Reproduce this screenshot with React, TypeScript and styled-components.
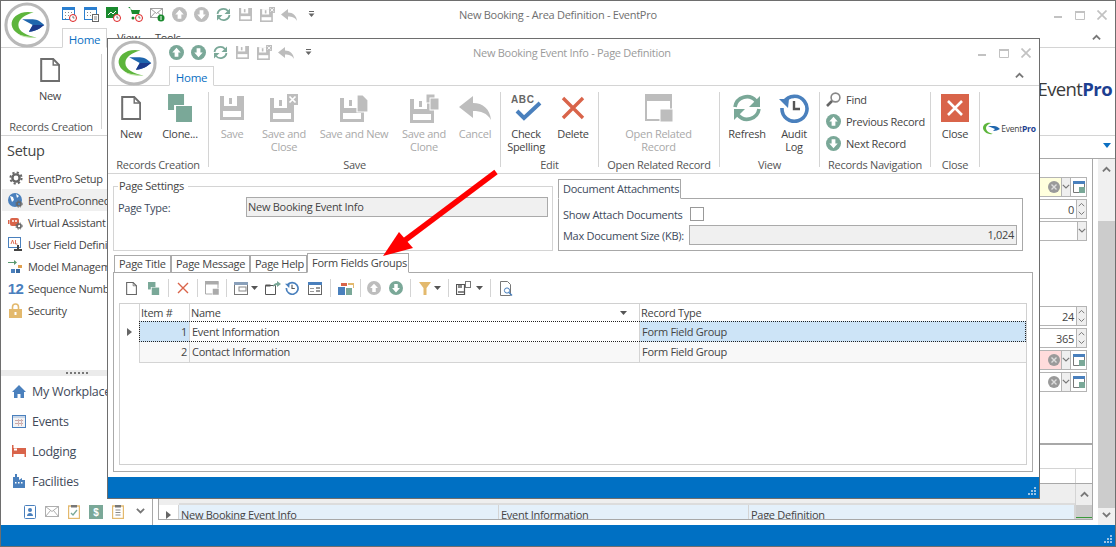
import React from "react";
import styled, { createGlobalStyle } from "styled-components";

const Global = createGlobalStyle`
  html, body { margin: 0; padding: 0; background: #fff; overflow: hidden; }
  *, *::before, *::after { box-sizing: border-box; }
  body { font-family: "Open Sans", "Noto Sans", "Liberation Sans", sans-serif; font-size: 11px; letter-spacing: -0.28px; color: #444; }
`;

const TEAL = "#7aa898";
const GRAY = "#bdbdbd";
const RED = "#d9644a";
const BLUE = "#4a80bd";
const DARK = "#6e6e6e";
const LINE = "#d4d4d4";
const STATUS = "#0070c3";

/* ---------- icons ---------- */
type Sz = { s?: number; c?: string };

const Logo = () => (
  <svg width="46" height="46" viewBox="0 0 48 48">
    <circle cx="24" cy="24" r="22" fill="#fff" stroke="#b9b9b9" strokeWidth="3.2" />
    <path d="M31 11C17 8 7 16 8 24c1 8 12 14 26 13-10-2-19-6-19-13 0-6 7-11 16-13z" fill="#5db53c" />
    <path d="M34 37c-8 1-14 0-19-3 5 2 11 2 19 3z" fill="#bfe3a8" />
    <path d="M19 18h11c5 0 9 3 12 6-4 3-9 7-16 7l4-7z" fill="#1f66ad" />
    <path d="M42 24c-4 3-9 7-16 7l4-7z" fill="#1c3a8c" />
  </svg>
);

const Doc = ({ s = 24, c = DARK }: Sz) => (
  <svg width={s * 0.85} height={s} viewBox="0 0 20 24" fill="none" stroke={c} strokeWidth="2">
    <path d="M1 1h12l6 6v16H1z" /><path d="M13 1v6h6" strokeWidth="1.4" />
  </svg>
);

const Clone = ({ s = 28, c = TEAL }: Sz) => (
  <svg width={s * 0.86} height={s} viewBox="0 0 24 28">
    <rect x="0" y="0" width="16" height="16" fill={c} />
    <rect x="6" y="11" width="18" height="17" fill="#fff" />
    <rect x="8" y="12" width="16" height="16" fill={c} />
  </svg>
);

const Floppy = ({ x = 0, y = 0, w = 24, h = 24, c = GRAY }: { x?: number; y?: number; w?: number; h?: number; c?: string }) => (
  <g transform={`translate(${x} ${y}) scale(${w / 24} ${h / 24})`}>
    <rect width="24" height="24" fill={c} />
    <rect x="4" y="0" width="13" height="10" fill="#fff" />
    <rect x="9" y="2" width="3" height="6" fill={c} />
    <rect x="3" y="15" width="18" height="6" fill="#fff" />
  </g>
);

const Save = ({ s = 24, c = GRAY }: Sz) => (
  <svg width={s} height={s} viewBox="0 0 24 24"><Floppy c={c} /></svg>
);

const SaveX = ({ s = 28 }: Sz) => (
  <svg width={s} height={s} viewBox="0 0 28 28">
    <Floppy y={4} w={24} h={24} />
    <rect x="17" y="0" width="11" height="11" fill={GRAY} />
    <path d="M19.5 2.5l6 6M25.5 2.5l-6 6" stroke="#fff" strokeWidth="1.7" />
  </svg>
);

const SaveDoc = ({ s = 28 }: Sz) => (
  <svg width={s} height={s} viewBox="0 0 28 28">
    <Floppy y={4} w={24} h={24} />
    <path d="M17 1h6l5 5v12H17z" fill={GRAY} stroke="#fff" strokeWidth="1.2" />
  </svg>
);

const SaveClone = ({ s = 29 }: Sz) => (
  <svg width={s} height={s} viewBox="0 0 29 29">
    <Floppy y={5} w={24} h={24} />
    <rect x="16" y="0" width="9" height="9" fill={GRAY} stroke="#fff" />
    <rect x="20" y="4" width="9" height="12" fill={GRAY} stroke="#fff" />
  </svg>
);

const Back = ({ w = 32, h = 24, c = GRAY }: { w?: number; h?: number; c?: string }) => (
  <svg width={w} height={h} viewBox="0 0 32 24">
    <path d="M0 11 14 0v7c10 0 17 6 18 17-4-7-10-9-18-9v7z" fill={c} />
  </svg>
);

const XMark = ({ s = 24, c = RED, w = 3.4 }: Sz & { w?: number }) => (
  <svg width={s} height={s} viewBox="0 0 24 24">
    <path d="M2 2l20 20M22 2 2 22" stroke={c} strokeWidth={w} fill="none" />
  </svg>
);

const Spell = () => (
  <svg width="32" height="28" viewBox="0 0 32 28">
    <text x="1" y="9" fontFamily="'Liberation Sans', sans-serif" fontWeight="700" fontSize="10" letterSpacing="0.6" fill="#666">ABC</text>
    <path d="M7 17l7 7L30 9" fill="none" stroke={BLUE} strokeWidth="4" />
  </svg>
);

const Related = ({ s = 28, c = GRAY }: Sz) => (
  <svg width={s} height={s} viewBox="0 0 28 28">
    <path d="M1 1h25v25H1z" fill="none" stroke={c} strokeWidth="2" />
    <rect x="0" y="0" width="27" height="7" fill={c} />
    <rect x="15" y="15" width="13" height="13" fill={c} stroke="#fff" />
  </svg>
);

const Refresh = ({ s = 30, c = TEAL }: Sz) => (
  <svg width={s} height={s} viewBox="0 0 30 30" fill="none" stroke={c} strokeWidth="3.6">
    <path d="M3 14A12 12 0 0 1 24 8" />
    <path d="M27 16A12 12 0 0 1 6 22" />
    <path d="M28 3v11H17z" fill={c} stroke="none" />
    <path d="M2 27V16h11z" fill={c} stroke="none" />
  </svg>
);

const Audit = ({ s = 30, c = BLUE }: Sz) => (
  <svg width={s} height={s} viewBox="0 0 30 30" fill="none">
    <path d="M5 9A12.5 12.5 0 1 1 3 15" stroke={c} strokeWidth="3.6" />
    <path d="M0 6l10 0-1 9z" fill={c} />
    <path d="M15 8v8h6" stroke="#555" strokeWidth="2.4" />
  </svg>
);

const Find = ({ s = 15 }: Sz) => (
  <svg width={s} height={s} viewBox="0 0 15 15" fill="none">
    <circle cx="9.5" cy="5.5" r="4.4" stroke="#888" strokeWidth="1.6" />
    <path d="M6 9l-5 5" stroke="#666" strokeWidth="2.6" />
  </svg>
);

const Round = ({ s = 15, c = TEAL, down = false }: Sz & { down?: boolean }) => (
  <svg width={s} height={s} viewBox="0 0 16 16">
    <circle cx="8" cy="8" r="8" fill={c} />
    <path d={down ? "M8 13 12.5 8H10V3.5H6V8H3.5z" : "M8 3 12.5 8H10v4.5H6V8H3.5z"} fill="#fff" />
  </svg>
);

const CloseSquare = () => (
  <svg width="28" height="28" viewBox="0 0 28 28">
    <rect width="28" height="28" fill={RED} />
    <path d="M7 7l14 14M21 7 7 21" stroke="#fff" strokeWidth="2.6" />
  </svg>
);

const Chevron = ({ up = false, s = 9, c = "#777", w = 2 }: { up?: boolean; s?: number; c?: string; w?: number }) => (
  <svg width={s} height={s * 0.7} viewBox="0 0 10 7" fill="none">
    <path d={up ? "M1 6l4-4 4 4" : "M1 1l4 4 4-4"} stroke={c} strokeWidth={w} />
  </svg>
);

const Minimize = () => <svg width="10" height="10" viewBox="0 0 10 10"><rect x="1" y="6" width="8" height="2" fill="#c2c2c2" /></svg>;
const Maximize = () => (
  <svg width="10" height="10" viewBox="0 0 10 10"><path d="M.5 1.5h9v8h-9z" fill="none" stroke="#c2c2c2" /><rect y="1" width="10" height="2" fill="#c2c2c2" /></svg>
);
const CloseGlyph = () => <svg width="10" height="10" viewBox="0 0 10 10"><path d="M.5.5l9 9M9.5.5l-9 9" stroke="#c2c2c2" strokeWidth="1.7" /></svg>;

const DropCaret = () => (
  <svg width="7" height="7" viewBox="0 0 7 7"><rect x="1" y="0" width="5" height="1" fill="#666" /><path d="M.5 2.5h6L3.5 6z" fill="#666" /></svg>
);
const Caret = () => <svg width="7" height="4" viewBox="0 0 7 4"><path d="M0 0h7L3.5 4z" fill="#555" /></svg>;

const CalClock = ({ c = "#2b7fd0" }: { c?: string }) => (
  <svg width="15" height="15" viewBox="0 0 15 15">
    <rect x=".5" y=".5" width="12" height="12" fill="#fff" stroke={c} />
    <rect width="13" height="3" fill={c} />
    <path d="M3 5h1v1H3zm3 0h1v1H6zm3 0h1v1H9zM3 8h1v1H3zm3 0h1v1H6zm-3 3h1v1H3z" fill="#888" />
    <circle cx="11" cy="11" r="3.5" fill="#fff" stroke="#d22" />
    <path d="M11 9v2h1.5" stroke="#555" strokeWidth=".8" fill="none" />
  </svg>
);
const CalList = () => (
  <svg width="15" height="15" viewBox="0 0 15 15">
    <rect x=".5" y=".5" width="12" height="12" fill="#fff" stroke="#2b7fd0" />
    <rect width="13" height="3" fill="#2b7fd0" />
    <path d="M3 5h1v1H3zm3 0h1v1H6zm-3 3h1v1H3zm3 0h1v1H6z" fill="#888" />
    <rect x="8.5" y="7.5" width="6" height="7" fill="#fff" stroke="#666" />
    <path d="M10 10h3M10 12h3" stroke="#666" strokeWidth=".8" />
  </svg>
);
const GreenClock = () => (
  <svg width="15" height="15" viewBox="0 0 15 15">
    <rect width="12" height="11" fill="#1a8a2e" />
    <path d="M2 8l3-3 2 2 3-3" stroke="#fff" fill="none" />
    <circle cx="11" cy="11" r="3.5" fill="#fff" stroke="#d22" />
    <path d="M11 9v2h1.5" stroke="#555" strokeWidth=".8" fill="none" />
  </svg>
);
const CartClock = () => (
  <svg width="15" height="15" viewBox="0 0 15 15">
    <path d="M0 0h2l2 7h7l1-4H4z" fill="#1a8a2e" />
    <circle cx="5" cy="11" r="1.5" fill="#1a8a2e" />
    <circle cx="11" cy="11" r="3.5" fill="#fff" stroke="#d22" />
    <path d="M11 9v2h1.5" stroke="#555" strokeWidth=".8" fill="none" />
  </svg>
);
const MailBadge = () => (
  <svg width="15" height="15" viewBox="0 0 15 15">
    <path d="M.5 1.5h12v9H.5zM.5 1.5l6 5 6-5M.5 10.5l4.5-5M12.5 10.5l-4.5-5" fill="#fff" stroke="#888" strokeWidth=".8" />
    <circle cx="11" cy="11" r="3.5" fill="#1a8a2e" />
    <path d="M11 9v4" stroke="#fff" />
  </svg>
);

const Gear = ({ s = 14, c = "#666" }: Sz) => (
  <svg width={s} height={s} viewBox="0 0 14 14" fill="none">
    <circle cx="7" cy="7" r="3.6" stroke={c} strokeWidth="2.4" />
    <circle cx="7" cy="7" r="5.6" stroke={c} strokeWidth="2" strokeDasharray="2.2 2.2" />
  </svg>
);
const GlobeGear = () => (
  <svg width="15" height="15" viewBox="0 0 15 15">
    <circle cx="7" cy="7" r="7" fill={BLUE} />
    <path d="M2 3l3 1 1 3-2 2zM8 1l3 2-2 2z" fill="#fff" />
    <circle cx="11" cy="11" r="2" fill="none" stroke="#666" strokeWidth="1.6" />
    <circle cx="11" cy="11" r="3.2" fill="none" stroke="#666" strokeWidth="1" strokeDasharray="1.3 1.3" />
  </svg>
);
const Robot = () => (
  <svg width="15" height="15" viewBox="0 0 15 15">
    <rect x="2" y="3" width="9" height="8" rx="2" fill={RED} />
    <rect x="0" y="5" width="1.5" height="4" fill={RED} />
    <circle cx="5" cy="6" r="1" fill="#fff" /><circle cx="8" cy="6" r="1" fill="#fff" />
    <circle cx="11" cy="11" r="2" fill="none" stroke="#666" strokeWidth="1.6" />
    <circle cx="11" cy="11" r="3.2" fill="none" stroke="#666" strokeWidth="1" strokeDasharray="1.3 1.3" />
  </svg>
);
const FieldDef = () => (
  <svg width="15" height="15" viewBox="0 0 15 15">
    <rect x=".5" y=".5" width="12" height="10" fill="#fff" stroke={BLUE} />
    <path d="M3 7l1.5-4L6 7M7.5 3v4h2" stroke={RED} fill="none" strokeWidth=".9" />
    <rect x="9" y="8" width="2" height="4" fill="#444" /><rect x="6" y="12" width="8" height="2" fill="#444" />
  </svg>
);
const Model = () => (
  <svg width="15" height="15" viewBox="0 0 15 15">
    <path d="M0 3h6V1l3 2.5L6 6V4H0z" fill="#5a9a70" />
    <rect x="10" y="6" width="4" height="3" fill="#e0a050" />
    <rect x="3" y="10" width="4" height="4" fill={BLUE} />
    <rect x="8" y="10" width="4" height="4" fill="#3a6aa0" />
  </svg>
);
const Lock = () => (
  <svg width="13" height="15" viewBox="0 0 13 15">
    <path d="M3.5 6V4a3 3 0 0 1 6 0v2" fill="none" stroke="#e3b96d" strokeWidth="1.6" />
    <rect y="6" width="13" height="9" fill="#e3b96d" />
    <rect x="5.5" y="9" width="2" height="3" fill="#fff" />
  </svg>
);
const House = () => (
  <svg width="14" height="13" viewBox="0 0 14 13"><path d="M7 0l7 7h-2v6H8.5V9h-3v4H2V7H0z" fill={BLUE} /></svg>
);
const Cal = () => (
  <svg width="14" height="13" viewBox="0 0 14 13">
    <rect x=".5" y=".5" width="13" height="12" fill="#f3f3f3" stroke={BLUE} />
    <rect x="1" y="1" width="12" height="2" fill="#c8d6e8" />
    <path d="M3 5h8v1H3zM3 8h8v1H3z" fill="#c9a6a6" /><path d="M6 4h1v7H6zM9 4h1v7H9z" fill="#d3b6b6" />
  </svg>
);
const Bed = () => (
  <svg width="14" height="12" viewBox="0 0 14 12">
    <path d="M0 0h1.5v3H14v9h-1.5V9h-11v3H0z" fill={RED} /><rect x="2" y="3.5" width="3" height="2" fill="#fff" />
  </svg>
);
const Factory = () => (
  <svg width="12" height="14" viewBox="0 0 12 14">
    <path d="M0 14V3h2V0h2v3h2V6l3-2v2h3v8z" fill={BLUE} /><path d="M2 8h1.5v1.5H2zm3 0h1.5v1.5H5zm3 0h1.5v1.5H8z" fill="#fff" />
  </svg>
);
const Contacts = () => (
  <svg width="12" height="14" viewBox="0 0 12 14">
    <rect x=".5" y=".5" width="11" height="13" rx="1" fill="#fff" stroke={BLUE} />
    <circle cx="6" cy="5" r="2" fill={BLUE} /><path d="M3 11c0-4 6-4 6 0z" fill={BLUE} />
  </svg>
);
const Mail = () => (
  <svg width="14" height="11" viewBox="0 0 14 11"><path d="M.5.5h13v10H.5zM.5.5l6.5 5 6.5-5M.5 10.5l5-6M13.5 10.5l-5-6" fill="#fff" stroke="#999" strokeWidth=".8" /></svg>
);
const Clip = ({ check = false }: { check?: boolean }) => (
  <svg width="12" height="14" viewBox="0 0 12 14">
    <rect x=".5" y="1" width="11" height="12.5" fill="#fff" stroke="#e3b96d" strokeWidth="1.4" />
    <rect x="3" y="0" width="6" height="2.5" fill="#777" />
    {check ? <path d="M3 8l2 2 4-5" stroke={TEAL} fill="none" strokeWidth="1.3" /> : <path d="M3.5 5h5M3.5 7.5h5M3.5 10h5" stroke="#888" />}
  </svg>
);
const Dollar = () => (
  <svg width="14" height="14" viewBox="0 0 14 14">
    <rect width="14" height="14" fill={TEAL} /><text x="7" y="11" textAnchor="middle" fontFamily="'Liberation Sans', sans-serif" fontWeight="700" fontSize="10" fill="#fff">$</text>
  </svg>
);
const WinDrop = () => (
  <svg width="14" height="13" viewBox="0 0 14 13">
    <rect x=".5" y=".5" width="13" height="12" fill="#fff" stroke="#777" />
    <rect width="14" height="3" fill="#8aa0ba" /><rect x="5" y="5" width="7" height="4" fill="none" stroke="#888" />
  </svg>
);
const Export = () => (
  <svg width="16" height="14" viewBox="0 0 16 14">
    <path d="M.5 4.5h10v9H.5z" fill="#fff" stroke="#555" /><path d="M.5 4.5h5" stroke="#555" strokeWidth="2" />
    <path d="M8 6c0-3 2-4 4-4V0l4 3-4 3V4c-2 0-3 1-4 2z" fill={TEAL} />
  </svg>
);
const FormIcon = () => (
  <svg width="14" height="13" viewBox="0 0 14 13">
    <rect x=".5" y=".5" width="13" height="12" fill="#fff" stroke="#666" /><rect width="14" height="3" fill={BLUE} />
    <path d="M2 6h4v1H2zM8 5h4v2H8zM2 9h4v1H2zM8 8h4v2H8z" fill="#999" />
  </svg>
);
const Blocks = () => (
  <svg width="16" height="13" viewBox="0 0 16 13">
    <rect x="0" y="5" width="7" height="8" fill={BLUE} /><rect x="8" y="6" width="6" height="7" fill={TEAL} />
    <rect x="3" y="1" width="6" height="3" fill={RED} /><path d="M10 1h6v5h-1V3h-5z" fill="#e3b96d" />
  </svg>
);
const Funnel = () => <svg width="12" height="13" viewBox="0 0 12 13"><path d="M0 0h12L7.5 6v7h-3V6z" fill="#e3b96d" /></svg>;
const Layout = () => (
  <svg width="15" height="14" viewBox="0 0 15 14">
    <path d="M.5 3.5h8v10h-8z" fill="none" stroke="#555" strokeWidth="1.2" /><rect x="2" y="4" width="4" height="3" fill="#888" />
    <rect x="2" y="10" width="6" height="2" fill="#888" /><rect x="9.5" y=".5" width="5" height="6" fill="#fff" stroke="#777" />
  </svg>
);
const DocSearch = () => (
  <svg width="13" height="15" viewBox="0 0 13 15">
    <path d="M.5.5h7l3 3v11H.5z" fill="#fff" stroke="#777" />
    <circle cx="7" cy="9.5" r="2.6" fill="#fff" stroke={BLUE} /><path d="M9 11.5l3 3" stroke={BLUE} strokeWidth="1.4" />
  </svg>
);
const Clear = () => (
  <svg width="12" height="12" viewBox="0 0 12 12">
    <circle cx="6" cy="6" r="6" fill="#9a9a9a" /><path d="M3.5 3.5l5 5M8.5 3.5l-5 5" stroke="#ddd" strokeWidth="1.4" />
  </svg>
);
const MiniWin = () => (
  <svg width="12" height="12" viewBox="0 0 12 12">
    <path d="M.5.5h11v11H.5z" fill="#fff" stroke="#777" /><rect width="12" height="3" fill={BLUE} /><rect x="6" y="6" width="6" height="6" fill={TEAL} />
  </svg>
);

/* ---------- layout ---------- */
const Desktop = styled.div`
  position: relative;
  width: 1116px;
  height: 547px;
  overflow: hidden;
  background: #fff;
`;
const BackWindow = styled.div`
  display: flex;
  flex-direction: column;
  width: 100%;
  height: 100%;
  border: 1px solid #6e6e6e;
  background: #fff;
`;
const FrontWindow = styled.div`
  position: absolute;
  left: 107px;
  top: 38px;
  width: 933px;
  height: 461px;
  display: flex;
  flex-direction: column;
  border: 1px solid #6e6e6e;
  background: #fff;
`;
const TitleRow = styled.div`
  position: relative;
  display: flex;
  align-items: center;
  height: 27px;
  padding: 0 2px 0 57px;
`;
const LogoSlot = styled.div`
  position: absolute;
  left: 3px;
  top: 1px;
  z-index: 3;
  line-height: 0;
`;
const QuickBtn = styled.div`
  width: 22px;
  height: 22px;
  display: flex;
  align-items: center;
  justify-content: center;
`;
const TitleText = styled.div<{ $m: number; $c: string }>`
  margin-left: ${(p) => p.$m}px;
  color: ${(p) => p.$c};
  white-space: nowrap;
`;
const WinControls = styled.div`
  display: flex;
  margin-left: auto;
`;
const TabRow = styled.div<{ $pr: number }>`
  display: flex;
  align-items: flex-end;
  height: 20px;
  padding: 0 ${(p) => p.$pr}px 0 61px;
  border-bottom: 1px solid ${LINE};
`;
const HomeTab = styled.div`
  width: 45px;
  height: 20px;
  margin-bottom: -1px;
  padding-top: 3px;
  text-align: center;
  color: #0a6fc2;
  font-size: 11.5px;
  background: #fff;
  border: 1px solid ${LINE};
  border-bottom: 1px solid #fff;
`;
const PlainTab = styled.div<{ $ml: number }>`
  margin-left: ${(p) => p.$ml}px;
  padding-bottom: 2px;
`;
const Collapse = styled.div`
  align-self: center;
  margin-left: auto;
  line-height: 0;
`;
const Ribbon = styled.div`
  display: flex;
  height: 88px;
  border-bottom: 1px solid ${LINE};
`;
const Group = styled.div<{ $w: number }>`
  display: flex;
  flex-direction: column;
  width: ${(p) => p.$w}px;
  flex: none;
`;
const GroupButtons = styled.div`
  display: flex;
  flex: 1;
`;
const GroupLabel = styled.div`
  height: 14px;
  line-height: 14px;
  margin-bottom: 1px;
  text-align: center;
  color: #555;
  white-space: nowrap;
`;
const RibbonSep = styled.div`
  flex: none;
  width: 1px;
  margin: 6px 0 6px;
  background: ${LINE};
`;
const RibbonBtn = styled.div<{ $w: number; $off?: boolean }>`
  display: flex;
  flex-direction: column;
  align-items: center;
  width: ${(p) => p.$w}px;
  padding-top: 7px;
  color: ${(p) => (p.$off ? "#a9a9a9" : "#444")};
  text-align: center;
  line-height: 13px;
`;
const IconBox = styled.div`
  display: flex;
  align-items: center;
  justify-content: center;
  height: 30px;
  margin-bottom: 4px;
`;
const NavList = styled.div`
  display: flex;
  flex-direction: column;
  padding: 2px 0 0 0;
`;
const NavItem = styled.div`
  display: flex;
  align-items: center;
  gap: 5px;
  height: 22px;
  padding-left: 6px;
  white-space: nowrap;
`;
const BrandSmall = styled.div`
  display: flex;
  align-items: flex-start;
  justify-content: center;
  gap: 1px;
  padding-top: 36px;
  width: 60px;
  font-size: 8.5px;
  line-height: 13px;
  letter-spacing: -0.25px;
`;
const BrandBig = styled.div`
  margin-left: auto;
  padding: 28px 3px 0 0;
  font-size: 18.5px;
  letter-spacing: -0.6px;
  color: #3a3a3a;
  white-space: nowrap;
`;
const Pro = styled.b`
  color: #1d3f91;
  font-weight: 700;
`;
const Lower = styled.div`
  display: flex;
  flex: 1;
  min-height: 0;
`;
const Sidebar = styled.div`
  display: flex;
  flex-direction: column;
  width: 152px;
  flex: none;
  border-right: 1px solid #a8a8a8;
`;
const SideHead = styled.div`
  height: 31px;
  padding: 5px 0 0 6px;
  font-size: 14.5px;
  color: #444;
`;
const SideItem = styled.div<{ $on?: boolean }>`
  display: flex;
  align-items: center;
  height: 22px;
  padding-left: 6px;
  margin-left: 1px;
  gap: 5px;
  background: ${(p) => (p.$on ? "#f0f0f0" : "transparent")};
  white-space: nowrap;
  overflow: hidden;
`;
const SideIcon = styled.span`
  display: flex;
  width: 15px;
  justify-content: center;
  flex: none;
`;
const NumberIcon = styled.span`
  color: ${BLUE};
  font: 700 15px "Liberation Sans", sans-serif;
  letter-spacing: -0.5px;
`;
const Splitter = styled.div`
  display: flex;
  align-items: center;
  justify-content: center;
  height: 6px;
  margin-top: 49px;
  background: #ebebeb;
`;
const Dots = styled.div`
  width: 22px;
  height: 2px;
  background: repeating-linear-gradient(90deg, #777 0 2px, transparent 2px 4px);
`;
const NavRow = styled.div`
  display: flex;
  align-items: center;
  height: 30px;
  padding-left: 11px;
  gap: 6px;
  font-size: 12.5px;
  color: #3f4a5a;
  white-space: nowrap;
`;
const NavIcon = styled.span`
  display: flex;
  width: 14px;
  justify-content: center;
`;
const ShortcutBar = styled.div`
  display: flex;
  align-items: center;
  margin-top: auto;
  height: 27px;
  padding-left: 18px;
`;
const Shortcut = styled.div`
  display: flex;
  justify-content: center;
  width: 22px;
`;
const RightCol = styled.div`
  display: flex;
  flex-direction: column;
  flex: 1;
  min-width: 0;
`;
const Band = styled.div`
  display: flex;
  align-items: center;
  justify-content: flex-end;
  height: 23px;
  padding-right: 2px;
  border-bottom: 1px solid #a8a8a8;
`;
const BandCaret = styled.div`
  width: 0;
  height: 0;
  margin: 0 0 4px;
  border-left: 4px solid transparent;
  border-right: 4px solid transparent;
  border-top: 5px solid #0a6fc2;
  margin-right: 2px;
`;
const Area = styled.div`
  display: flex;
  flex: 1;
  min-height: 0;
  padding-bottom: 5px;
`;
const MainPane = styled.div`
  display: flex;
  flex-direction: column;
  flex: 1;
  min-width: 0;
  padding-left: 5px;
`;
const FieldStack = styled.div`
  display: flex;
  flex-direction: column;
  align-items: flex-end;
  height: 284px;
  padding: 18px 5px 0 0;
  border-right: 1px solid #a8a8a8;
`;
const FieldSlot = styled.div<{ $t: number }>`
  margin-top: ${(p) => p.$t}px;
`;
const Combo = styled.div<{ $bg?: string }>`
  display: flex;
  align-items: stretch;
  width: 90px;
  height: 20px;
  background: ${(p) => p.$bg ?? "#fff"};
  border: 1px solid #b4b4b4;
`;
const ComboBody = styled.div`
  flex: 1;
  display: flex;
  align-items: center;
  justify-content: flex-end;
  padding-right: 1px;
`;
const SideBtn = styled.div<{ $w: number }>`
  display: flex;
  align-items: center;
  justify-content: center;
  width: ${(p) => p.$w}px;
  background: #efefef;
  border-left: 1px solid #b4b4b4;
`;
const IconBtn = styled.div`
  display: flex;
  align-items: center;
  justify-content: center;
  width: 16px;
  background: #fff;
  border-left: 1px solid #b4b4b4;
`;
const SpinBtn = styled.div`
  display: flex;
  flex-direction: column;
  align-items: center;
  justify-content: space-around;
  width: 10px;
  background: #efefef;
  border-left: 1px solid #b4b4b4;
`;
const SpinValue = styled.div`
  flex: 1;
  text-align: right;
  padding: 2px 2px 0 0;
  color: #444;
`;
const LowerBox = styled.div`
  flex: 1;
  display: flex;
  flex-direction: column;
  border: 1px solid #a8a8a8;
  border-top: 2px solid #a8a8a8;
  overflow: hidden;
`;
const LowerTop = styled.div`
  height: 24px;
  border-bottom: 1px solid ${LINE};
`;
const LowerMid = styled.div`
  display: flex;
  justify-content: flex-end;
  height: 15px;
  border-bottom: 1px solid #a8a8a8;
`;
const ScrollCell = styled.div<{ $bg?: string }>`
  display: flex;
  align-items: center;
  justify-content: center;
  width: 17px;
  flex: none;
  background: ${(p) => p.$bg ?? "transparent"};
  border-left: 1px solid ${LINE};
`;
const LowerHead = styled.div`
  display: flex;
  justify-content: flex-end;
  height: 21px;
  background: #eee;
`;
const LowerHeadFill = styled.div`
  flex: 1;
  margin: 14px 0 0 20px;
  border-bottom: 2px solid #dcdcdc;
`;
const LowerRow = styled.div`
  display: flex;
  flex: 1;
  overflow: hidden;
`;
const RowMark = styled.div`
  display: flex;
  align-items: center;
  justify-content: center;
  width: 20px;
  height: 20px;
  flex: none;
  border-right: 1px solid ${LINE};
`;
const Tri = styled.div`
  width: 0;
  height: 0;
  border-top: 4px solid transparent;
  border-bottom: 4px solid transparent;
  border-left: 5px solid #666;
`;
const LowerCells = styled.div`
  display: grid;
  grid-template-columns: 320px 250px 1fr;
  flex: 1;
  height: 20px;
  background: #e4f0fa;
  line-height: 20px;
  color: #444;
`;
const LowerCell = styled.div`
  padding-left: 2px;
  border-right: 1px solid ${LINE};
  white-space: nowrap;
`;
const GreenTick = styled.div`
  width: 100%;
  height: 1px;
  margin: auto 0 1px;
  background: #3a9a3a;
`;
const ScrollBar = styled.div`
  display: flex;
  flex-direction: column;
  width: 17px;
  flex: none;
  margin: 0 0 -5px 5px;
`;
const ScrollEnd = styled.div<{ $h: number; $jc: string }>`
  display: flex;
  justify-content: center;
  align-items: ${(p) => p.$jc};
  height: ${(p) => p.$h}px;
  padding: 7px 0;
  background: #f0f0f0;
`;
const ScrollThumb = styled.div`
  flex: 1;
  background: #cccccc;
`;
const Status = styled.div<{ $h: number }>`
  display: flex;
  justify-content: flex-end;
  align-items: flex-end;
  height: ${(p) => p.$h}px;
  flex: none;
  padding: 0 3px 3px 0;
  background: ${STATUS};
`;
const Grip = styled.div`
  display: grid;
  grid-template-columns: repeat(3, 2px);
  grid-template-rows: repeat(3, 2px);
  gap: 1px;
`;
const GripDot = styled.div<{ $off?: boolean }>`
  background: ${(p) => (p.$off ? "transparent" : "#9cc3e4")};
`;
const Body = styled.div`
  display: flex;
  flex-direction: column;
  flex: 1;
  min-height: 0;
  padding: 5px 6px 5px 5px;
`;
const SettingsRow = styled.div`
  display: flex;
  gap: 5px;
  height: 72px;
  flex: none;
`;
const Fieldset = styled.fieldset`
  width: 440px;
  flex: none;
  margin: 0;
  padding: 0 4px 0 4px;
  border: 1px solid ${LINE};
  min-width: 0;
`;
const Legend = styled.legend`
  padding: 0 4px 0 1px;
  margin-left: 0;
  line-height: 14px;
  color: #444;
`;
const TypeRow = styled.div`
  display: flex;
  align-items: center;
  padding-top: 4px;
`;
const FormLabel = styled.div<{ $w: number }>`
  width: ${(p) => p.$w}px;
  flex: none;
  white-space: nowrap;
  color: #3d4a5c;
`;
const ReadOnly = styled.div<{ $right?: boolean }>`
  flex: 1;
  height: 20px;
  line-height: 18px;
  padding: 0 2px 0 1px;
  background: #f0f0f0;
  border: 1px solid #aaa;
  color: #444;
  text-align: ${(p) => (p.$right ? "right" : "left")};
`;
const DocPanel = styled.div`
  display: flex;
  flex-direction: column;
  width: 465px;
  flex: none;
`;
const DocTab = styled.div`
  width: 123px;
  height: 20px;
  margin-bottom: -1px;
  padding-left: 4px;
  line-height: 17px;
  background: #fff;
  border: 1px solid #a8a8a8;
  border-bottom: 1px solid #fff;
  position: relative;
  z-index: 1;
  color: #3d4a5c;
  white-space: nowrap;
`;
const DocBox = styled.div`
  flex: 1;
  display: flex;
  flex-direction: column;
  padding: 5px 5px 0 4px;
  gap: 1px;
  border: 1px solid #a8a8a8;
`;
const DocRow = styled.div`
  display: flex;
  align-items: center;
  height: 20px;
`;
const CheckBox = styled.div`
  width: 14px;
  height: 14px;
  border: 1px solid #999;
  background: #fff;
`;
const TabStrip = styled.div`
  display: flex;
  align-items: flex-end;
  height: 20px;
  flex: none;
  margin-top: 2px;
  padding-left: 1px;
  margin-bottom: -1px;
  position: relative;
  z-index: 1;
`;
const PageTab = styled.div<{ $w: number; $on?: boolean }>`
  width: ${(p) => p.$w}px;
  height: ${(p) => (p.$on ? 20 : 18)}px;
  padding-left: 4px;
  line-height: ${(p) => (p.$on ? 17 : 16)}px;
  background: #fff;
  border: 1px solid #aaa;
  border-bottom: 1px solid ${(p) => (p.$on ? "#fff" : "#aaa")};
  white-space: nowrap;
`;
const TabPanel = styled.div`
  display: flex;
  flex-direction: column;
  flex: 1;
  min-height: 0;
  padding: 0 5px 6px 5px;
  border: 1px solid #aaa;
`;
const Toolbar = styled.div`
  display: flex;
  align-items: center;
  height: 30px;
  padding-left: 1px;
  flex: none;
`;
const ToolBtn = styled.div<{ $w: number }>`
  display: flex;
  align-items: center;
  justify-content: center;
  width: ${(p) => p.$w}px;
  flex: none;
`;
const ToolDrop = styled.div<{ $w: number; $pl: number; $gap: number }>`
  display: flex;
  align-items: center;
  gap: ${(p) => p.$gap}px;
  width: ${(p) => p.$w}px;
  padding-left: ${(p) => p.$pl}px;
  flex: none;
`;
const ToolSep = styled.div`
  width: 1px;
  height: 18px;
  flex: none;
  background: ${LINE};
`;
const Grid = styled.div`
  flex: 1;
  border: 1px solid #d0d0d0;
`;
const GridRow = styled.div`
  display: flex;
`;
const Indicator = styled.div<{ $h: number }>`
  display: flex;
  align-items: center;
  justify-content: center;
  width: 19px;
  height: ${(p) => p.$h}px;
  flex: none;
  background: #fff;
`;
const Cells = styled.div<{ $h: number; $bg?: string; $focus?: boolean }>`
  display: grid;
  grid-template-columns: 50px 450px 1fr;
  flex: 1;
  height: ${(p) => p.$h}px;
  line-height: ${(p) => p.$h}px;
  background: ${(p) => p.$bg ?? "transparent"};
  outline: ${(p) => (p.$focus ? "1px dotted #222" : "none")};
  outline-offset: -1px;
`;
const Cell = styled.div<{ $right?: boolean; $bg?: string }>`
  padding: 0 2px;
  text-align: ${(p) => (p.$right ? "right" : "left")};
  background: ${(p) => p.$bg ?? "transparent"};
  border-left: 1px solid ${LINE};
  border-bottom: 1px solid ${LINE};
  white-space: nowrap;
`;
const HeadCell = styled(Cell)`
  display: flex;
  align-items: center;
  justify-content: space-between;
  padding: 0 12px 0 1px;
  border-bottom: none;
`;
const ArrowOverlay = styled.svg`
  position: absolute;
  left: 375px;
  top: 165px;
  z-index: 5;
`;

const Controls = () => (
  <WinControls>
    <QuickBtn><Minimize /></QuickBtn>
    <QuickBtn><Maximize /></QuickBtn>
    <QuickBtn><CloseGlyph /></QuickBtn>
  </WinControls>
);

const GripMark = () => (
  <Grip>
    {[1, 1, 0, 1, 0, 0, 0, 0, 0].map((off, i) => (
      <GripDot key={i} $off={!!off} />
    ))}
  </Grip>
);

const SpinField = ({ v }: { v: string }) => (
  <Combo>
    <SpinValue>{v}</SpinValue>
    <SpinBtn><Chevron up s={7} w={1.4} /><Chevron s={7} w={1.4} /></SpinBtn>
  </Combo>
);

const ClearField = ({ bg }: { bg?: string }) => (
  <Combo $bg={bg}>
    <ComboBody><Clear /></ComboBody>
    <SideBtn $w={9}><Chevron s={8} w={1.5} /></SideBtn>
    <IconBtn><MiniWin /></IconBtn>
  </Combo>
);

const sideItems: [React.ReactNode, string, boolean?][] = [
  [<Gear s={14} />, "EventPro Setup"],
  [<GlobeGear />, "EventProConnect", true],
  [<Robot />, "Virtual Assistant"],
  [<FieldDef />, "User Field Definitions"],
  [<Model />, "Model Management"],
  [<NumberIcon>12</NumberIcon>, "Sequence Numbers"],
  [<Lock />, "Security"],
];

const navRows: [React.ReactNode, string][] = [
  [<House />, "My Workplace"],
  [<Cal />, "Events"],
  [<Bed />, "Lodging"],
  [<Factory />, "Facilities"],
];

export default function App() {
  return (
    <Desktop>
      <Global />
      <BackWindow>
        <TitleRow>
          <LogoSlot><Logo /></LogoSlot>
          <QuickBtn><CalClock /></QuickBtn>
          <QuickBtn><CalList /></QuickBtn>
          <QuickBtn><GreenClock /></QuickBtn>
          <QuickBtn><CartClock /></QuickBtn>
          <QuickBtn><MailBadge /></QuickBtn>
          <QuickBtn><Round c={GRAY} /></QuickBtn>
          <QuickBtn><Round c={GRAY} down /></QuickBtn>
          <QuickBtn><Refresh s={15} /></QuickBtn>
          <QuickBtn><Save s={13} /></QuickBtn>
          <QuickBtn><SaveX s={15} /></QuickBtn>
          <QuickBtn><Back w={16} h={12} /></QuickBtn>
          <QuickBtn><DropCaret /></QuickBtn>
          <TitleText $m={137} $c="#6f6f6f">New Booking - Area Definition - EventPro</TitleText>
          <Controls />
        </TitleRow>
        <TabRow $pr={14}>
          <HomeTab>Home</HomeTab>
          <PlainTab $ml={10}>View</PlainTab>
          <PlainTab $ml={15}>Tools</PlainTab>
          <Collapse><Chevron up /></Collapse>
        </TabRow>
        <Ribbon>
          <Group $w={100}>
            <GroupButtons>
              <RibbonBtn $w={98}>
                <IconBox><Doc /></IconBox>
                New
              </RibbonBtn>
            </GroupButtons>
            <GroupLabel>Records Creation</GroupLabel>
          </Group>
          <RibbonSep />
          <BrandBig>Event<Pro>Pro</Pro></BrandBig>
        </Ribbon>
        <Lower>
          <Sidebar>
            <SideHead>Setup</SideHead>
            {sideItems.map(([icon, label, on]) => (
              <SideItem key={label} $on={on}>
                <SideIcon>{icon}</SideIcon>
                {label}
              </SideItem>
            ))}
            <Splitter><Dots /></Splitter>
            {navRows.map(([icon, label]) => (
              <NavRow key={label}>
                <NavIcon>{icon}</NavIcon>
                {label}
              </NavRow>
            ))}
            <ShortcutBar>
              <Shortcut><Contacts /></Shortcut>
              <Shortcut><Mail /></Shortcut>
              <Shortcut><Clip check /></Shortcut>
              <Shortcut><Dollar /></Shortcut>
              <Shortcut><Clip /></Shortcut>
              <Shortcut><Chevron s={9} /></Shortcut>
            </ShortcutBar>
          </Sidebar>
          <RightCol>
            <Band><BandCaret /></Band>
            <Area>
              <MainPane>
                <FieldStack>
                  <FieldSlot $t={0}><ClearField bg="#ffffdd" /></FieldSlot>
                  <FieldSlot $t={2}><SpinField v="0" /></FieldSlot>
                  <FieldSlot $t={2}>
                    <Combo>
                      <ComboBody />
                      <SideBtn $w={9}><Chevron s={8} w={1.5} /></SideBtn>
                    </Combo>
                  </FieldSlot>
                  <FieldSlot $t={65}><SpinField v="24" /></FieldSlot>
                  <FieldSlot $t={2}><SpinField v="365" /></FieldSlot>
                  <FieldSlot $t={2}><ClearField bg="#ffdcdc" /></FieldSlot>
                  <FieldSlot $t={2}><ClearField /></FieldSlot>
                </FieldStack>
                <LowerBox>
                  <LowerTop />
                  <LowerMid><ScrollCell /></LowerMid>
                  <LowerHead>
                    <LowerHeadFill />
                    <ScrollCell><Chevron up /></ScrollCell>
                  </LowerHead>
                  <LowerRow>
                    <RowMark><Tri /></RowMark>
                    <LowerCells>
                      <LowerCell>New Booking Event Info</LowerCell>
                      <LowerCell>Event Information</LowerCell>
                      <LowerCell>Page Definition</LowerCell>
                    </LowerCells>
                    <ScrollCell $bg="#ccc"><GreenTick /></ScrollCell>
                  </LowerRow>
                </LowerBox>
              </MainPane>
              <ScrollBar>
                <ScrollEnd $h={62} $jc="flex-start"><Chevron up /></ScrollEnd>
                <ScrollThumb />
                <ScrollEnd $h={17} $jc="flex-end"><Chevron /></ScrollEnd>
              </ScrollBar>
            </Area>
          </RightCol>
        </Lower>
        <Status $h={21}><GripMark /></Status>
      </BackWindow>

      <FrontWindow>
        <TitleRow>
          <LogoSlot><Logo /></LogoSlot>
          <QuickBtn><Round /></QuickBtn>
          <QuickBtn><Round down /></QuickBtn>
          <QuickBtn><Refresh s={15} /></QuickBtn>
          <QuickBtn><Save s={13} /></QuickBtn>
          <QuickBtn><SaveX s={15} /></QuickBtn>
          <QuickBtn><Back w={16} h={12} /></QuickBtn>
          <QuickBtn><DropCaret /></QuickBtn>
          <TitleText $m={154} $c="#9a9a9a">New Booking Event Info - Page Definition</TitleText>
          <Controls />
        </TitleRow>
        <TabRow $pr={15}>
          <HomeTab>Home</HomeTab>
          <Collapse><Chevron up /></Collapse>
        </TabRow>
        <Ribbon>
          <Group $w={100}>
            <GroupButtons>
              <RibbonBtn $w={46}><IconBox><Doc /></IconBox>New</RibbonBtn>
              <RibbonBtn $w={52}><IconBox><Clone /></IconBox>Clone...</RibbonBtn>
            </GroupButtons>
            <GroupLabel>Records Creation</GroupLabel>
          </Group>
          <RibbonSep />
          <Group $w={291}>
            <GroupButtons>
              <RibbonBtn $w={46} $off><IconBox><Save /></IconBox>Save</RibbonBtn>
              <RibbonBtn $w={58} $off><IconBox><SaveX /></IconBox>Save and<br />Close</RibbonBtn>
              <RibbonBtn $w={82} $off><IconBox><SaveDoc /></IconBox>Save and New</RibbonBtn>
              <RibbonBtn $w={58} $off><IconBox><SaveClone /></IconBox>Save and<br />Clone</RibbonBtn>
              <RibbonBtn $w={44} $off><IconBox><Back /></IconBox>Cancel</RibbonBtn>
            </GroupButtons>
            <GroupLabel>Save</GroupLabel>
          </Group>
          <RibbonSep />
          <Group $w={97}>
            <GroupButtons>
              <RibbonBtn $w={50}><IconBox><Spell /></IconBox>Check<br />Spelling</RibbonBtn>
              <RibbonBtn $w={44}><IconBox><XMark /></IconBox>Delete</RibbonBtn>
            </GroupButtons>
            <GroupLabel>Edit</GroupLabel>
          </Group>
          <RibbonSep />
          <Group $w={120}>
            <GroupButtons>
              <RibbonBtn $w={119} $off><IconBox><Related /></IconBox>Open Related<br />Record</RibbonBtn>
            </GroupButtons>
            <GroupLabel>Open Related Record</GroupLabel>
          </Group>
          <RibbonSep />
          <Group $w={99}>
            <GroupButtons>
              <RibbonBtn $w={54}><IconBox><Refresh /></IconBox>Refresh</RibbonBtn>
              <RibbonBtn $w={40}><IconBox><Audit /></IconBox>Audit<br />Log</RibbonBtn>
            </GroupButtons>
            <GroupLabel>View</GroupLabel>
          </Group>
          <RibbonSep />
          <Group $w={110}>
            <GroupButtons>
              <NavList>
                <NavItem><Find />Find</NavItem>
                <NavItem><Round />Previous Record</NavItem>
                <NavItem><Round down />Next Record</NavItem>
              </NavList>
            </GroupButtons>
            <GroupLabel>Records Navigation</GroupLabel>
          </Group>
          <RibbonSep />
          <Group $w={48}>
            <GroupButtons>
              <RibbonBtn $w={48}><IconBox><CloseSquare /></IconBox>Close</RibbonBtn>
            </GroupButtons>
            <GroupLabel>Close</GroupLabel>
          </Group>
          <RibbonSep />
          <BrandSmall>
            <svg width="17" height="13" viewBox="0 0 17 13">
              <path d="M8 1C3 0 0 3 0 6s4 7 10 6c-4-1-7-3-7-6 0-2 2-4 5-5z" fill="#5db53c" />
              <path d="M5 4h6c2 0 4 1 6 3-2 1-4 2-7 2l2-2z" fill="#1f66ad" />
            </svg>
            <span>Event<Pro>Pro</Pro></span>
          </BrandSmall>
        </Ribbon>
        <Body>
          <SettingsRow>
            <Fieldset>
              <Legend>Page Settings</Legend>
              <TypeRow>
                <FormLabel $w={128}>Page Type:</FormLabel>
                <ReadOnly>New Booking Event Info</ReadOnly>
              </TypeRow>
            </Fieldset>
            <DocPanel>
              <DocTab>Document Attachments</DocTab>
              <DocBox>
                <DocRow><FormLabel $w={127}>Show Attach Documents</FormLabel><CheckBox /></DocRow>
                <DocRow><FormLabel $w={126}>Max Document Size (KB):</FormLabel><ReadOnly $right>1,024</ReadOnly></DocRow>
              </DocBox>
            </DocPanel>
          </SettingsRow>
          <TabStrip>
            <PageTab $w={57}>Page Title</PageTab>
            <PageTab $w={79}>Page Message</PageTab>
            <PageTab $w={57}>Page Help</PageTab>
            <PageTab $w={102} $on>Form Fields Groups</PageTab>
          </TabStrip>
          <TabPanel>
            <Toolbar>
              <ToolBtn $w={24}><Doc s={13} c="#666" /></ToolBtn>
              <ToolBtn $w={20}><Clone s={13} /></ToolBtn>
              <ToolBtn $w={4} />
              <ToolSep />
              <ToolBtn $w={28}><XMark s={12} w={2.8} /></ToolBtn>
              <ToolSep />
              <ToolBtn $w={28}><Related s={14} c="#aaa" /></ToolBtn>
              <ToolSep />
              <ToolDrop $w={38} $pl={7} $gap={3}><WinDrop /><Caret /></ToolDrop>
              <ToolBtn $w={16}><Export /></ToolBtn>
              <ToolBtn $w={22}><Audit s={14} /></ToolBtn>
              <ToolBtn $w={24}><FormIcon /></ToolBtn>
              <ToolBtn $w={3} />
              <ToolSep />
              <ToolBtn $w={29}><Blocks /></ToolBtn>
              <ToolSep />
              <ToolBtn $w={26}><Round s={14} c={GRAY} /></ToolBtn>
              <ToolBtn $w={18}><Round s={14} down /></ToolBtn>
              <ToolBtn $w={5} />
              <ToolSep />
              <ToolDrop $w={37} $pl={8} $gap={3}><Funnel /><Caret /></ToolDrop>
              <ToolSep />
              <ToolDrop $w={41} $pl={7} $gap={5}><Layout /><Caret /></ToolDrop>
              <ToolSep />
              <ToolBtn $w={30}><DocSearch /></ToolBtn>
            </Toolbar>
            <Grid>
              <GridRow>
                <Indicator $h={17} />
                <Cells $h={17}>
                  <HeadCell>Item #</HeadCell>
                  <HeadCell>Name<Caret /></HeadCell>
                  <HeadCell>Record Type</HeadCell>
                </Cells>
              </GridRow>
              <GridRow>
                <Indicator $h={21}><Tri /></Indicator>
                <Cells $h={21} $bg="#cde4f7" $focus>
                  <Cell $right>1</Cell>
                  <Cell $bg="#fff">Event Information</Cell>
                  <Cell>Form Field Group</Cell>
                </Cells>
              </GridRow>
              <GridRow>
                <Indicator $h={20} />
                <Cells $h={20} $bg="#f8f8f8">
                  <Cell $right>2</Cell>
                  <Cell>Contact Information</Cell>
                  <Cell>Form Field Group</Cell>
                </Cells>
              </GridRow>
            </Grid>
          </TabPanel>
        </Body>
        <Status $h={21}><GripMark /></Status>
      </FrontWindow>

      <ArrowOverlay width="130" height="100" viewBox="375 165 130 100">
        <path d="M496 172 404 241" stroke="#f00" strokeWidth="5.5" fill="none" />
        <path d="M383 256 399 232 413 248z" fill="#f00" />
      </ArrowOverlay>
    </Desktop>
  );
}
